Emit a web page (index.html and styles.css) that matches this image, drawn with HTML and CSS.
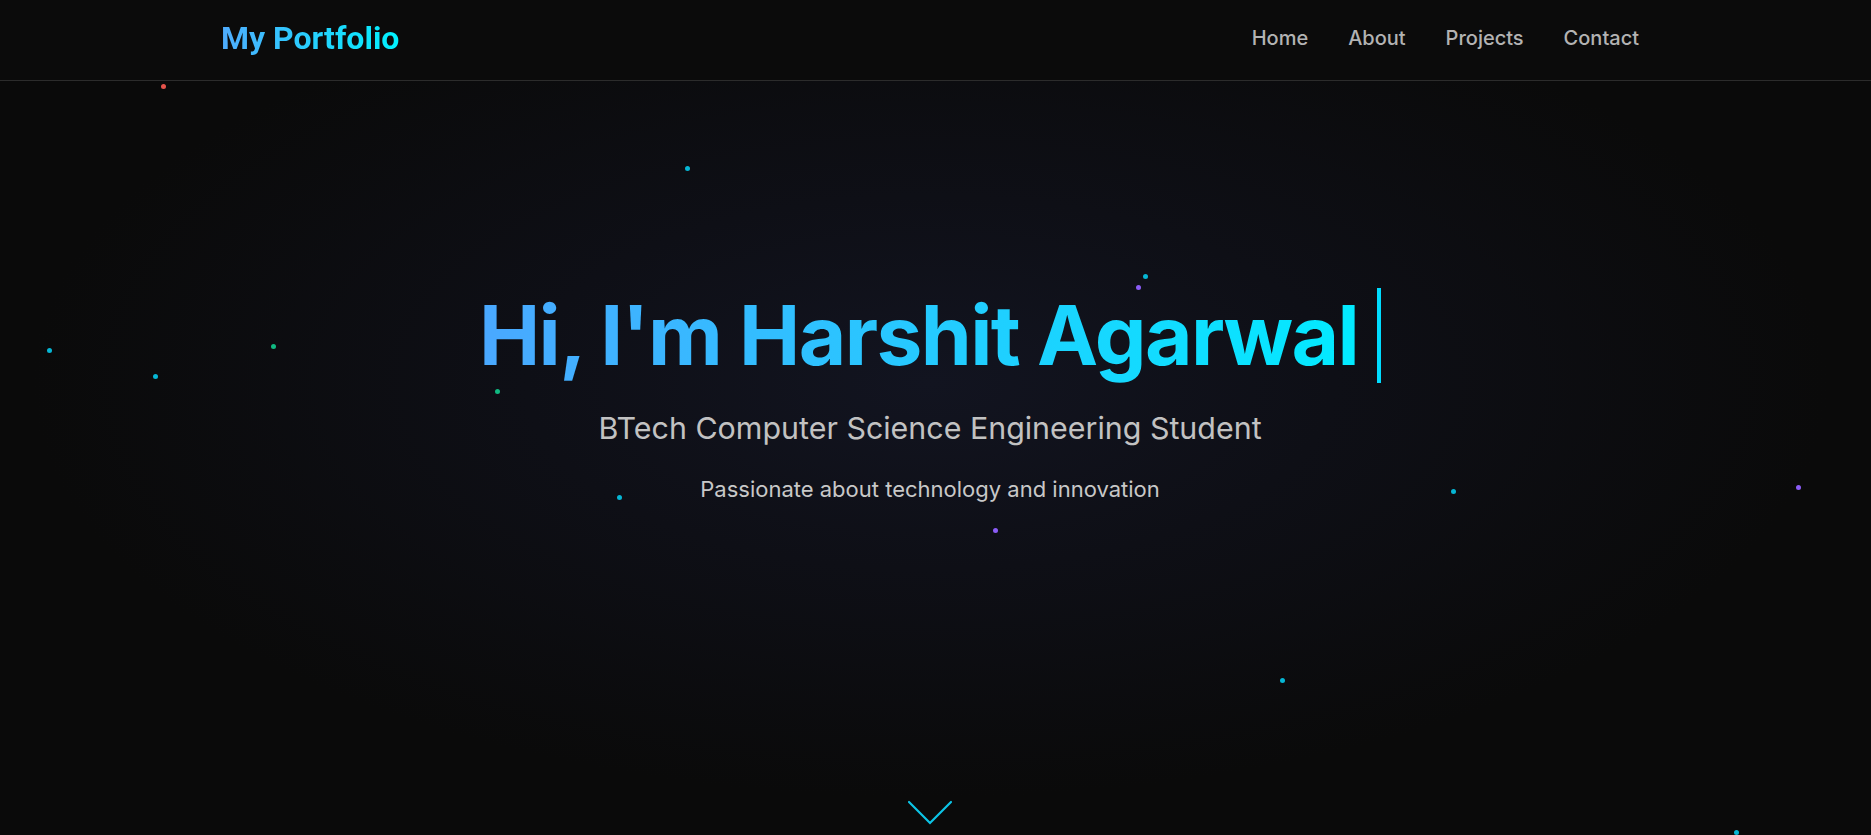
FILE: index.html
```html
<!DOCTYPE html>
<html lang="en">
<head>
<meta charset="UTF-8">
<title>My Portfolio</title>
<link rel="stylesheet" href="styles.css">
</head>
<body>
<div class="particles">
  <span class="dot red" style="left:161px;top:84px"></span>
  <span class="dot cyan" style="left:685px;top:166px"></span>
  <span class="dot cyan" style="left:1143px;top:274px"></span>
  <span class="dot purple" style="left:1136px;top:285px"></span>
  <span class="dot cyan" style="left:47px;top:348px"></span>
  <span class="dot green" style="left:271px;top:344px"></span>
  <span class="dot cyan" style="left:153px;top:374px"></span>
  <span class="dot green" style="left:495px;top:389px"></span>
  <span class="dot cyan" style="left:617px;top:495px"></span>
  <span class="dot purple" style="left:993px;top:528px"></span>
  <span class="dot cyan" style="left:1451px;top:489px"></span>
  <span class="dot purple" style="left:1796px;top:485px"></span>
  <span class="dot cyan" style="left:1280px;top:678px"></span>
  <span class="dot cyan" style="left:1734px;top:830px"></span>
</div>
<header class="nav">
  <div class="nav-inner">
    <a class="logo" href="#">My Portfolio</a>
    <nav class="links">
      <a href="#">Home</a>
      <a href="#">About</a>
      <a href="#">Projects</a>
      <a href="#">Contact</a>
    </nav>
  </div>
</header>
<main class="hero">
  <div class="hero-content">
    <h1 class="title"><span class="typed">Hi, I'm Harshit Agarwal</span><span class="cursor"></span></h1>
    <p class="subtitle">BTech Computer Science Engineering Student</p>
    <p class="tagline">Passionate about technology and innovation</p>
  </div>
  <svg class="chevron" width="46" height="26" viewBox="0 0 46 26" fill="none">
    <polyline points="2,2 23,23 44,2" stroke="#0cc4e6" stroke-width="2.2" stroke-linecap="round" stroke-linejoin="miter"/>
  </svg>
</main>
</body>
</html>
```
FILE: styles.css
```css
* { box-sizing: border-box; }
html, body { margin: 0; padding: 0; }
body {
  background: #0a0a0a;
  font-family: Inter, "Liberation Sans", sans-serif;
  color: #e5e5e5;
  position: relative;
  min-height: 835px;
  overflow: hidden;
}
a { text-decoration: none; }

.particles {
  position: absolute;
  inset: 0;
  pointer-events: none;
  z-index: 2;
}
.dot {
  position: absolute;
  width: 5px;
  height: 5px;
  border-radius: 50%;
}
.dot.cyan { background: #06b6d4; }
.dot.purple { background: #8b5cf6; }
.dot.green { background: #10b981; }
.dot.red { background: #e5534b; }

.nav {
  height: 81px;
  background: #0b0b0b;
  border-bottom: 1px solid #2c2c2c;
  padding-right: 11px;
  display: flex;
  align-items: center;
}
.nav-inner {
  width: 1418px;
  margin: 0 auto;
  display: flex;
  justify-content: space-between;
  align-items: center;
  margin-top: -4px;
}
.logo {
  font-family: Roboto, "Noto Sans", sans-serif;
  font-weight: 700;
  font-size: 32px;
  background: linear-gradient(90deg, #4facfe 0%, #00f2fe 100%);
  -webkit-background-clip: text;
  background-clip: text;
  color: transparent;
  margin-top: -1px;
}
.links {
  display: flex;
  gap: 40px;
}
.links a {
  color: #b3b3b3;
  font-size: 20px;
  font-weight: 500;
}

.hero {
  min-height: 754px;
  display: flex;
  flex-direction: column;
  align-items: center;
  padding: 207px 11px 9px 0;
  background: radial-gradient(ellipse 48% 55% at 49.7% 40%, #121420 0%, #0e0f16 45%, #0a0a0a 100%);
}
.hero-content {
  display: flex;
  flex-direction: column;
  align-items: center;
  text-align: center;
}
.title {
  margin: 0;
  font-size: 82px;
  font-weight: 700;
  line-height: 95px;
  letter-spacing: -1.6px;
  display: flex;
  align-items: stretch;
}
.typed {
  background: linear-gradient(90deg, #4aa8ff 0%, #00ecff 100%);
  -webkit-background-clip: text;
  background-clip: text;
  color: transparent;
  padding-right: 19px;
}
.cursor {
  width: 4px;
  background: #00dcff;
}
.subtitle {
  margin: 24px 0 0;
  font-size: 30.4px;
  line-height: 42px;
  font-weight: 400;
  color: #c2c2c2;
}
.tagline {
  margin: 24px 0 0;
  font-size: 22px;
  line-height: 32px;
  color: #c8c8c8;
}
.chevron {
  margin-top: auto;
}
```
